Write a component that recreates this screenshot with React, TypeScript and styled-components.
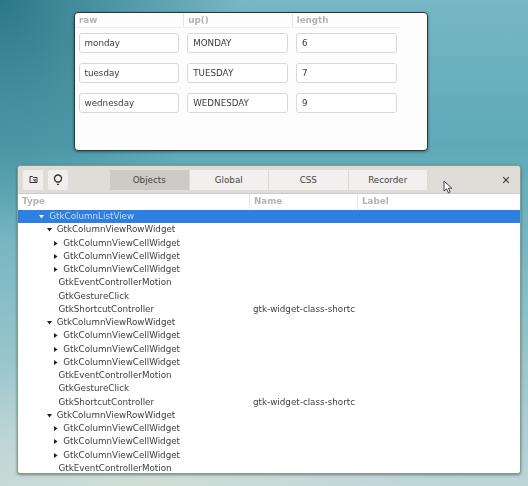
import styled, { createGlobalStyle } from 'styled-components';

const Global = createGlobalStyle`
    html, body {
        margin: 0;
        padding: 0;
    }
    body {
        width: 528px;
        height: 486px;
        overflow: hidden;
        font-family: "DejaVu Sans", sans-serif;
    }
`
const Desktop = styled.div`
    position: relative;
    width: 528px;
    height: 486px;
    box-sizing: border-box;
    padding: 12px 0 0 17px;
    overflow: hidden;
    background:
        radial-gradient(circle at 0px 0px, #2a7889 0, rgba(42, 120, 137, 0) 240px),
        radial-gradient(ellipse 320px 130px at 150px 486px, #d0ddd6 0, rgba(208, 221, 214, 0) 100%),
        linear-gradient(180deg, #78b7c4 0, #5ea9b8 30%, #8cc0c8 65%, #bcd5d9 100%);
`
const Soft = styled.div`
    filter: blur(0.45px);
`
const DemoWindow = styled.div`
    width: 354px;
    height: 139px;
    margin-left: 57px;
    box-sizing: border-box;
    background: #fdfdfd;
    border: 1px solid #2a3a3c;
    border-radius: 4px;
    box-shadow: 0 1px 3px rgba(0, 0, 0, 0.4);
    overflow: hidden;
`
const DemoHead = styled.div`
    display: grid;
    grid-template-columns: 108.3px 108.4px 108.3px;
    width: 325px;
    height: 14px;
    border-bottom: 1px solid #efefef;
`
const DemoHeadCell = styled.div`
    padding-left: 4px;
    font-size: 8.75px;
    font-weight: bold;
    line-height: 14px;
    color: #b4b4b4;
    & + & {
        border-left: 1px solid #e6e6e6;
    }
`
const DemoRows = styled.div`
    display: grid;
    grid-template-columns: repeat(3, 100.7px);
    column-gap: 8px;
    row-gap: 10px;
    padding: 5.3px 0 0 3.5px;
`
const Field = styled.div`
    height: 20px;
    box-sizing: border-box;
    border: 1px solid #d8d8d6;
    border-radius: 3px;
    background: #ffffff;
    padding-left: 5px;
    font-size: 8.75px;
    line-height: 18px;
    color: #3a3a3a;
`
const Inspector = styled.div`
    width: 504px;
    height: 309px;
    margin-top: 14px;
    box-sizing: border-box;
    background: #ffffff;
    border: 1px solid #7f9f88;
    border-radius: 4px 4px 3px 3px;
    box-shadow: 0 1px 3px rgba(0, 0, 0, 0.4);
    overflow: hidden;
`
const Toolbar = styled.div`
    display: flex;
    align-items: center;
    height: 28px;
    padding: 0 5px;
    box-sizing: border-box;
    background: #dfdcd8;
    border-bottom: 1px solid #cfccc8;
`
const IconButton = styled.div`
    display: flex;
    align-items: center;
    justify-content: center;
    width: 20px;
    height: 20px;
    margin-right: 5px;
    background: #f1efed;
    border-radius: 2px;
    color: #333333;
`
const Tabs = styled.div`
    display: flex;
    margin-left: 37px;
`
const Tab = styled.div<{ $active?: boolean }>`
    width: 79.5px;
    height: 20px;
    text-align: center;
    font-size: 8.75px;
    line-height: 20px;
    color: #444444;
    background: ${p => (p.$active ? '#cdcac5' : '#f2f0ee')};
    border-right: 1px solid #dcd9d5;
    box-sizing: border-box;
`
const Close = styled.div`
    margin-left: auto;
    margin-right: 5px;
    display: flex;
    color: #3a3a3a;
`
const TreeHead = styled.div`
    display: grid;
    grid-template-columns: 231px 108px 1fr;
    height: 16px;
    background: #ffffff;
`
const TreeHeadCell = styled.div`
    padding-left: 4px;
    font-size: 8.75px;
    font-weight: bold;
    line-height: 14px;
    color: #b4b4b4;
    & + & {
        border-left: 1px solid #e8e8e8;
    }
`
const TreeRow = styled.div<{ $selected?: boolean }>`
    display: grid;
    grid-template-columns: 235px 104px 1fr;
    height: 13.25px;
    line-height: 13.25px;
    font-size: 8.75px;
    color: ${p => (p.$selected ? '#c9ddf8' : '#3d3d3d')};
    background: ${p => (p.$selected ? '#2f7fe0' : 'transparent')};
    white-space: nowrap;
`
const TypeCell = styled.div<{ $indent: number }>`
    display: flex;
    align-items: center;
    padding-left: ${p => p.$indent}px;
`
const Arrow = styled.span<{ $open?: boolean }>`
    width: 10px;
    flex: none;
    display: flex;
    svg {
        transform: rotate(${p => (p.$open ? 90 : 0)}deg);
    }
`
const Pointer = styled.svg`
    position: absolute;
    left: 443px;
    top: 180px;
`

type Row = { label: string; indent: number; arrow?: 'open' | 'closed'; name?: string; selected?: boolean };

const cell = (): Row => ({ label: 'GtkColumnViewCellWidget', indent: 35.3, arrow: 'closed' });
const rowWidget = (): Row => ({ label: 'GtkColumnViewRowWidget', indent: 28.7, arrow: 'open' });
const motion = (): Row => ({ label: 'GtkEventControllerMotion', indent: 40.5 });
const click = (): Row => ({ label: 'GtkGestureClick', indent: 40.5 });
const shortcut = (): Row => ({ label: 'GtkShortcutController', indent: 40.5, name: 'gtk-widget-class-shortc' });

const rows: Row[] = [
    { label: 'GtkColumnListView', indent: 21.3, arrow: 'open', selected: true },
    rowWidget(), cell(), cell(), cell(), motion(), click(), shortcut(),
    rowWidget(), cell(), cell(), cell(), motion(), click(), shortcut(),
    rowWidget(), cell(), cell(), cell(), motion(),
];

const days = [
    ['monday', 'MONDAY', '6'],
    ['tuesday', 'TUESDAY', '7'],
    ['wednesday', 'WEDNESDAY', '9'],
];

export default function App() {
    return (
        <Desktop>
            <Global />
            <Soft>
                <DemoWindow>
                    <DemoHead>
                        <DemoHeadCell>raw</DemoHeadCell>
                        <DemoHeadCell>up()</DemoHeadCell>
                        <DemoHeadCell>length</DemoHeadCell>
                    </DemoHead>
                    <DemoRows>
                        {days.flat().map((text, i) => (
                            <Field key={i}>{text}</Field>
                        ))}
                    </DemoRows>
                </DemoWindow>
                <Inspector>
                    <Toolbar>
                        <IconButton>
                            <svg width="9" height="9" viewBox="0 0 9 9" fill="none" stroke="currentColor" strokeWidth="1">
                                <path d="M1 1.5h2.5l1 1h3.5v5h-7z" />
                                <path d="M4 4.5l2.5 1.5M6 4v2.5" />
                            </svg>
                        </IconButton>
                        <IconButton>
                            <svg width="10" height="12" viewBox="0 0 10 12" fill="none" stroke="currentColor" strokeWidth="1.3">
                                <path d="M3.6 8C2.3 7.2 1.4 6 1.4 4.6a3.6 3.6 0 0 1 7.2 0C8.6 6 7.700 7.200 6.400 8z" />
                                <path d="M4 10.400h2" />
                            </svg>
                        </IconButton>
                        <Tabs>
                            <Tab $active>Objects</Tab>
                            <Tab>Global</Tab>
                            <Tab>CSS</Tab>
                            <Tab>Recorder</Tab>
                        </Tabs>
                        <Close>
                            <svg width="8" height="8" viewBox="0 0 8 8" stroke="currentColor" strokeWidth="1.1">
                                <path d="M1.2 1.2l5.6 5.6M6.8 1.2l-5.6 5.6" />
                            </svg>
                        </Close>
                    </Toolbar>
                    <TreeHead>
                        <TreeHeadCell>Type</TreeHeadCell>
                        <TreeHeadCell>Name</TreeHeadCell>
                        <TreeHeadCell>Label</TreeHeadCell>
                    </TreeHead>
                    {rows.map((row, i) => (
                        <TreeRow key={i} $selected={row.selected}>
                            <TypeCell $indent={row.indent}>
                                {row.arrow && (
                                    <Arrow $open={row.arrow === 'open'}>
                                        <svg width="5" height="5" viewBox="0 0 5 5" fill={row.selected ? '#ffffff' : '#222222'}>
                                            <path d="M1 0l3.5 2.5L1 5z" />
                                        </svg>
                                    </Arrow>
                                )}
                                {row.label}
                            </TypeCell>
                            <div>{row.name}</div>
                            <div />
                        </TreeRow>
                    ))}
                </Inspector>
            </Soft>
            <Pointer width="11" height="14" viewBox="0 0 11 14">
                <path d="M1 1v10l2.6-2.2 1.8 4 1.8-.8-1.8-3.8h3.4z" fill="#ffffff" stroke="#333333" strokeWidth="0.9" />
            </Pointer>
        </Desktop>
    );
}
